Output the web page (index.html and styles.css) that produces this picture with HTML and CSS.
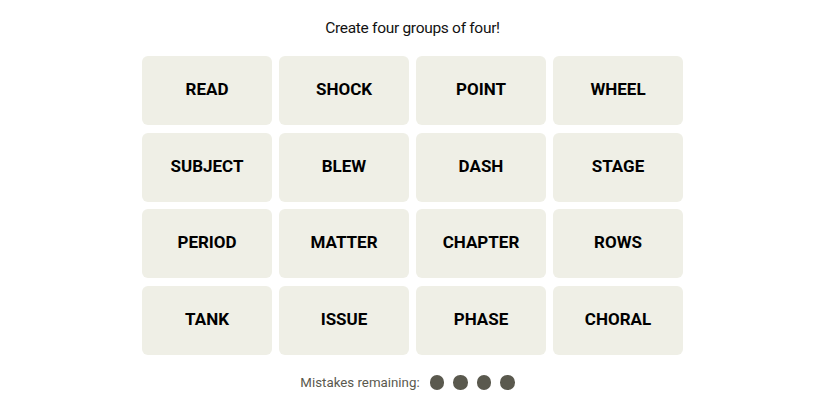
FILE: index.html
```html
<!DOCTYPE html>
<html>
<head>
<meta charset="utf-8">
<link rel="stylesheet" href="styles.css">
</head>
<body>
<main class="game">
  <p class="prompt">Create four groups of four!</p>
  <div class="board">
    <div class="tile">READ</div>
    <div class="tile">SHOCK</div>
    <div class="tile">POINT</div>
    <div class="tile">WHEEL</div>
    <div class="tile">SUBJECT</div>
    <div class="tile">BLEW</div>
    <div class="tile">DASH</div>
    <div class="tile">STAGE</div>
    <div class="tile">PERIOD</div>
    <div class="tile">MATTER</div>
    <div class="tile">CHAPTER</div>
    <div class="tile">ROWS</div>
    <div class="tile">TANK</div>
    <div class="tile">ISSUE</div>
    <div class="tile">PHASE</div>
    <div class="tile">CHORAL</div>
  </div>
  <div class="mistakes">
    <span class="mistakes-label">Mistakes remaining:</span>
    <span class="dots">
      <span class="dot"></span><span class="dot"></span><span class="dot"></span><span class="dot"></span>
    </span>
  </div>
</main>
</body>
</html>
```

FILE: styles.css
```css
html, body {
  margin: 0;
  padding: 0;
  background: #ffffff;
}

.game {
  width: 825px;
  display: flex;
  flex-direction: column;
  align-items: center;
  font-family: Roboto, "Liberation Sans", Arial, sans-serif;
}

.prompt {
  margin: 18px 0 0 0;
  height: 20px;
  line-height: 20px;
  font-size: 15.5px;
  letter-spacing: -0.3px;
  color: #121212;
}

.board {
  margin-top: 18px;
  display: grid;
  grid-template-columns: repeat(4, 130px);
  grid-auto-rows: 69px;
  column-gap: 7px;
  row-gap: 7.5px;
}

.tile {
  background: #efefe6;
  border-radius: 6px;
  display: flex;
  align-items: center;
  justify-content: center;
  padding-bottom: 3px;
  box-sizing: border-box;
  font-weight: 700;
  font-size: 17px;
  color: #000;
}

.mistakes {
  margin-top: 20px;
  margin-right: 10px;
  display: flex;
  align-items: center;
  gap: 10px;
  height: 16px;
}

.mistakes-label {
  font-size: 13.3px;
  color: #5a594e;
}

.dots {
  display: flex;
  gap: 9px;
}

.dot {
  width: 14.5px;
  height: 14.5px;
  border-radius: 50%;
  background: #5a594e;
}
```
